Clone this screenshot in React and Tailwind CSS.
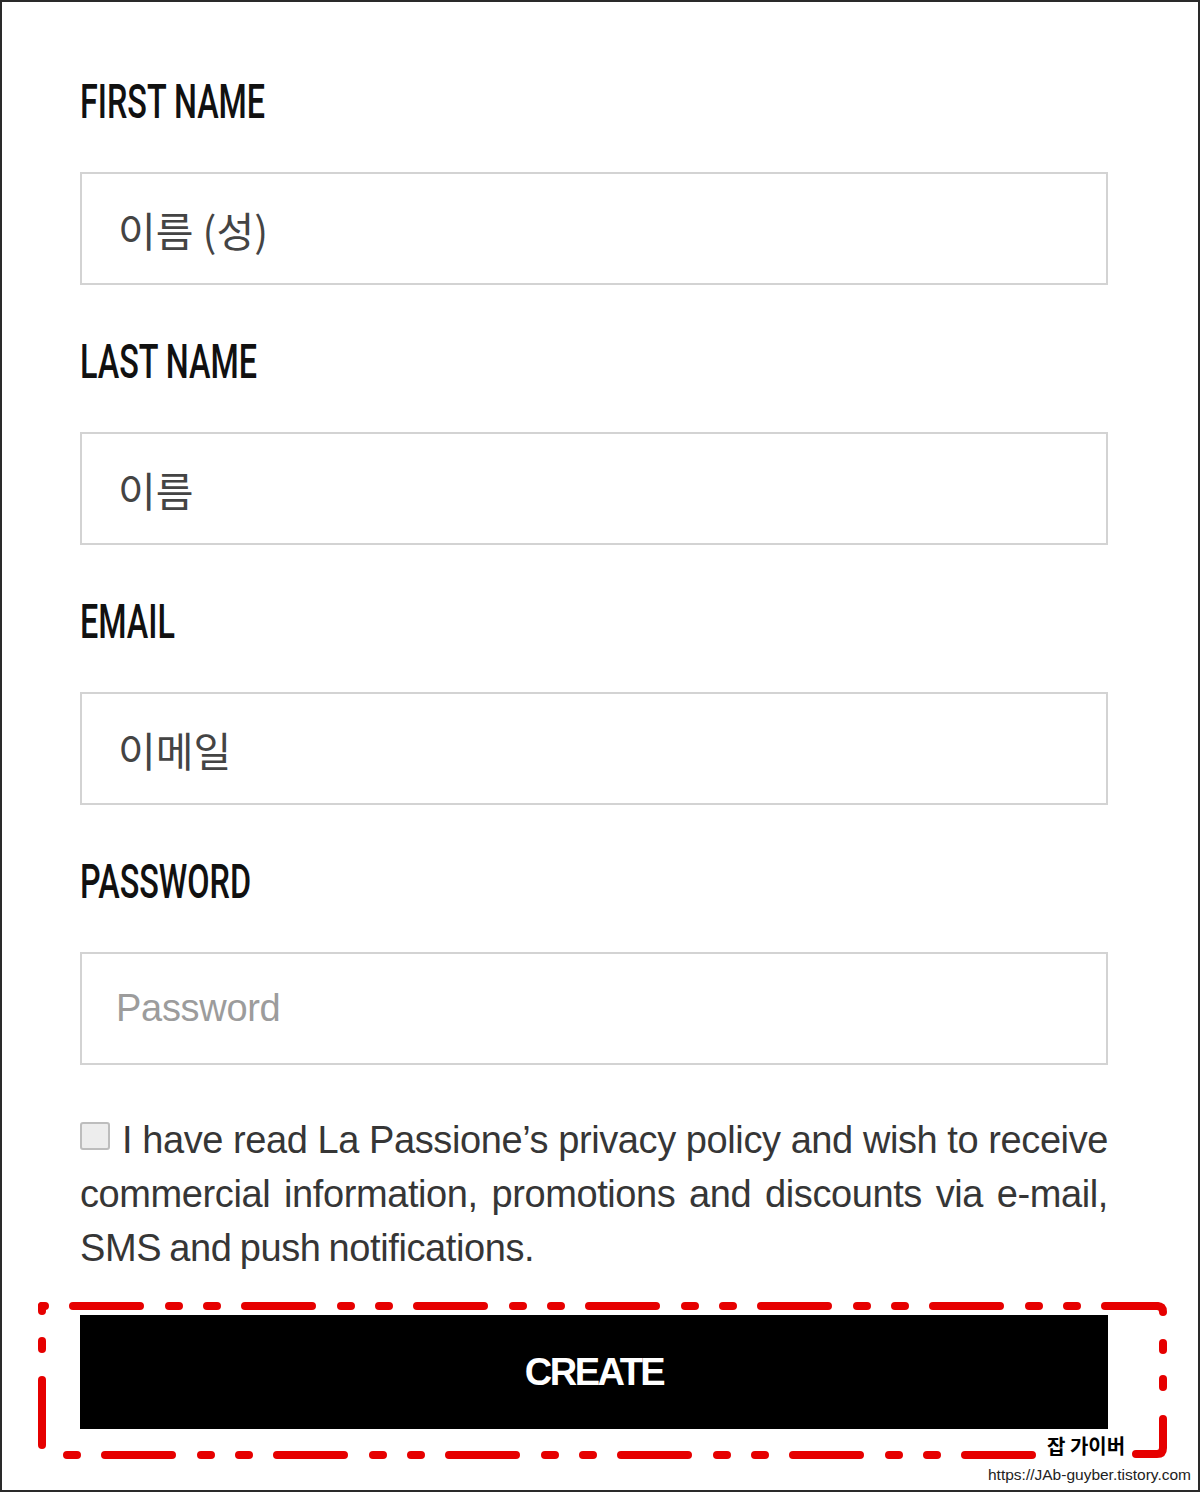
import React from 'react';

const fields = [
  { label: 'FIRST NAME', value: '이름 (성)' },
  { label: 'LAST NAME', value: '이름' },
  { label: 'EMAIL', value: '이메일' },
  { label: 'PASSWORD', placeholder: 'Password', type: 'password' },
];

function Field({ label, value, placeholder, type, first }) {
  return (
    <div className={first ? 'flex flex-col' : 'mt-[52px] flex flex-col'}>
      <div className="h-[49px] origin-left scale-x-[0.66] whitespace-nowrap font-['Roboto',sans-serif] text-[49px] font-medium leading-[49px] text-[#111]">
        {label}
      </div>
      {type === 'password' ? (
        <input
          type="password"
          placeholder={placeholder}
          className="mt-[46px] h-[113px] w-full border-2 border-[#d3d3d3] bg-white pl-[34px] font-['Liberation_Sans',Arial,sans-serif] text-[38px] tracking-[-0.3px] text-[#333] outline-none placeholder:text-[#9c9c9c]"
        />
      ) : (
        <input
          type="text"
          defaultValue={value}
          className="mt-[46px] h-[113px] w-full border-2 border-[#d3d3d3] bg-white pl-[36px] font-['Noto_Sans_CJK_KR','Noto_Sans',sans-serif] text-[41px] text-[#444] outline-none"
        />
      )}
    </div>
  );
}

// red dash-dot annotation drawn around the button
function Annotation() {
  const dash = '67 29 10 28 10 28';
  return (
    <svg className="pointer-events-none absolute left-0 top-0" width="1200" height="1492">
      <g fill="none" stroke="#e60000" strokeWidth="8" strokeLinecap="round">
        {/* top */}
        <line x1="40" y1="1304" x2="1155" y2="1304" strokeDasharray={dash} strokeDashoffset="141" />
        <path d="M1150 1304 H1155 Q1161 1304 1161 1310" />
        {/* right */}
        <line x1="1161" y1="1341" x2="1161" y2="1348" />
        <line x1="1161" y1="1377" x2="1161" y2="1385" />
        <path d="M1161 1417 V1446 Q1161 1452 1155 1452 H1134" />
        {/* bottom */}
        <line x1="40" y1="1453" x2="1100" y2="1453" strokeDasharray={dash} strokeDashoffset="109" />
        {/* left */}
        <line x1="40" y1="1304" x2="40" y2="1309" />
        <line x1="40" y1="1339" x2="40" y2="1347" />
        <line x1="40" y1="1378" x2="40" y2="1443" />
      </g>
    </svg>
  );
}

function App() {
  return (
    <div className="relative h-[1492px] w-[1200px] overflow-hidden border-2 border-[#2a2a2a] bg-white">
      <div className="ml-[78px] w-[1028px] pt-[75px]">
        {fields.map((f, i) => (
          <Field key={f.label} {...f} first={i === 0} />
        ))}

        <p className="mt-[48px] font-['Liberation_Sans',Arial,sans-serif] text-[38px] leading-[54px] tracking-[-0.4px] text-[#363636] [word-spacing:-2px]">
          <span className="block [text-align-last:justify]">
            <span className="mr-[12px] inline-block h-[28px] w-[30px] rounded-[3px] border-2 border-[#bdbdbd] bg-[#ededed] align-[3px]" />
            I have read La Passione’s privacy policy and wish to receive
          </span>
          <span className="block [text-align-last:justify]">
            commercial information, promotions and discounts via e-mail,
          </span>
          <span className="block">SMS and push notifications.</span>
        </p>

        <button
          type="button"
          className="mt-[40px] flex h-[114px] w-full items-center justify-center bg-black font-['Liberation_Sans',Arial,sans-serif] text-[38px] font-bold tracking-[-2.5px] text-white"
        >
          CREATE
        </button>
      </div>

      <Annotation />

      <div className="absolute left-[1040px] top-[1431px] bg-white px-[5px] font-['Noto_Sans_CJK_KR',sans-serif] text-[20px] font-bold leading-[26px] text-black">
        잡 가이버
      </div>
      <div className="absolute left-[986px] top-[1463px] font-['Liberation_Sans',Arial,sans-serif] text-[15.5px] leading-[20px] text-[#222]">
        https://JAb-guyber.tistory.com
      </div>
    </div>
  );
}

export default App;
